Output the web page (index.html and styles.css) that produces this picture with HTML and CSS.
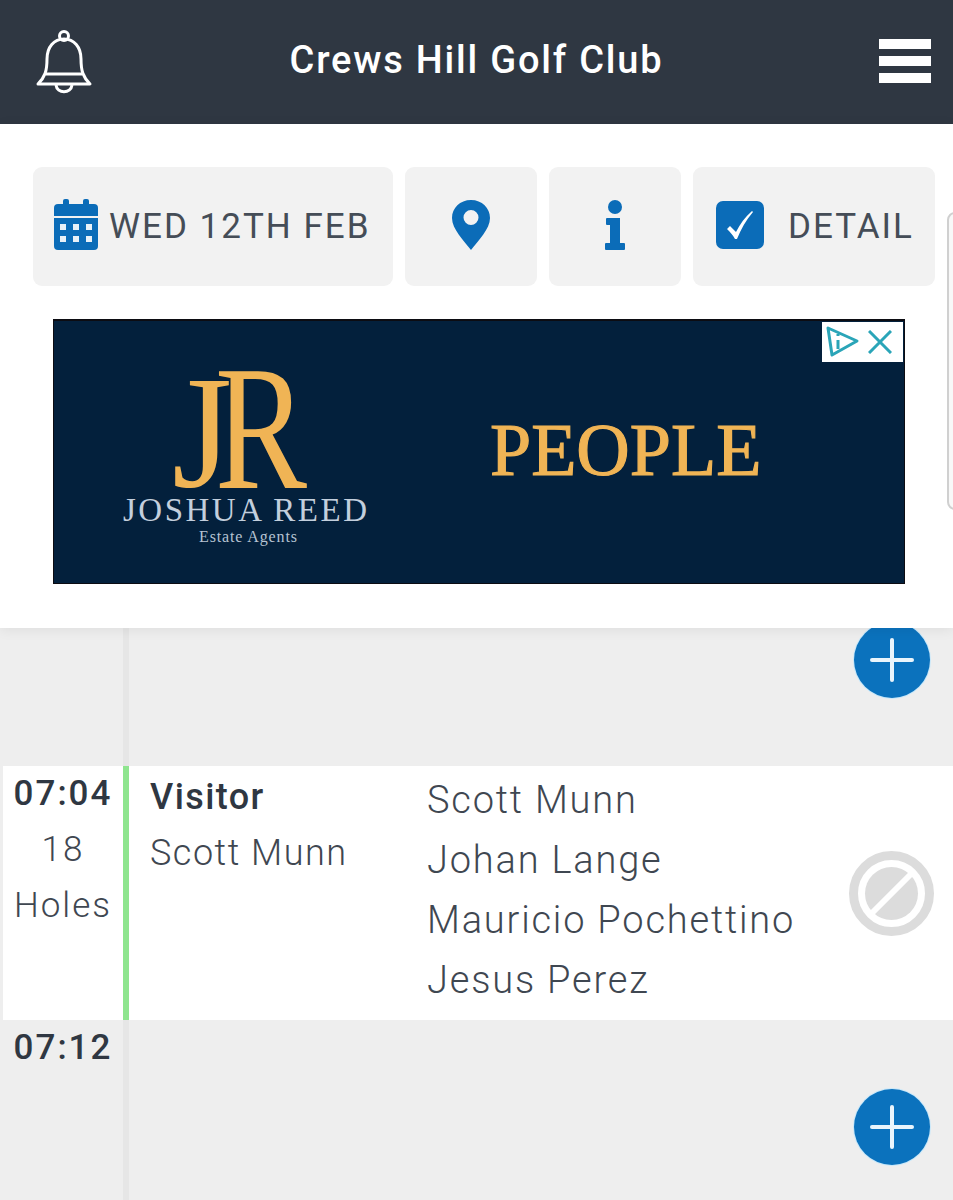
FILE: index.html
```html
<!DOCTYPE html>
<html lang="en">
<head>
  <meta charset="UTF-8" />
  <meta name="viewport" content="width=device-width, initial-scale=1" />
  <title>Crews Hill Golf Club</title>
  <link rel="stylesheet" href="styles.css">
</head>
<body>

  <header class="topbar">
    <div class="bell">
      <svg width="60" height="66" viewBox="0 0 60 66" fill="none" stroke="#fff" stroke-width="3" stroke-linejoin="round">
        <circle cx="30" cy="7" r="4.5" />
        <path d="M4 55 C11 48 13 42 13 30 C13 18 20 10 30 10 C40 10 47 18 47 30 C47 42 49 48 56 55 Z" />
        <path d="M12 45 H48" />
        <path d="M22 56 C23 65 37 65 38 56" />
      </svg>
    </div>
    <div class="club-name">Crews Hill Golf Club</div>
    <div class="burger"><span></span><span></span><span></span></div>
  </header>

  <section class="panel">
    <div class="toolbar">
      <div class="tool tool-date">
        <svg width="44" height="51" viewBox="0 0 44 51">
          <rect x="9" y="0" width="6" height="10" rx="2" fill="#0b6cb8" />
          <rect x="29" y="0" width="6" height="10" rx="2" fill="#0b6cb8" />
          <path d="M4 5 H40 A4 4 0 0 1 44 9 V17 H0 V9 A4 4 0 0 1 4 5 Z" fill="#0b6cb8" />
          <path d="M0 19 H44 V47 A4 4 0 0 1 40 51 H4 A4 4 0 0 1 0 47 Z" fill="#0b6cb8" />
          <g fill="#e8f1f8">
            <rect x="6" y="25" width="6" height="6" /><rect x="19" y="25" width="6" height="6" /><rect x="32" y="25" width="6" height="6" />
            <rect x="6" y="37" width="6" height="6" /><rect x="19" y="37" width="6" height="6" /><rect x="32" y="37" width="6" height="6" />
          </g>
        </svg>
        <span>WED 12TH FEB</span>
      </div>
      <div class="tool tool-icon">
        <svg width="38" height="50" viewBox="0 0 38 50">
          <path fill-rule="evenodd" fill="#0b6cb8" d="M19 0 C8 0 0 8 0 18 C0 29 12 41 19 50 C26 41 38 29 38 18 C38 8 30 0 19 0 Z M19 10 A7.5 7.5 0 1 1 19 25 A7.5 7.5 0 0 1 19 10 Z" />
        </svg>
      </div>
      <div class="tool tool-icon">
        <svg width="20" height="50" viewBox="0 0 20 50" fill="#0b6cb8">
          <circle cx="10" cy="7" r="7" />
          <path d="M2 18 H15 V43 H19 A1 1 0 0 1 20 44 V49 A1 1 0 0 1 19 50 H1 A1 1 0 0 1 0 49 V44 A1 1 0 0 1 1 43 H5 V25 H2 A1 1 0 0 1 1 24 V19 A1 1 0 0 1 2 18 Z" />
        </svg>
      </div>
      <div class="tool tool-detail">
        <div class="checkbox">
          <svg width="30" height="30" viewBox="0 0 30 30" fill="#fff">
            <path d="M2 19 L5 16 L11 22 C15 14 20 7 27 1 L28 2 C21 10 16 19 12 29 L10 29 C8 25 5 22 2 19 Z" />
          </svg>
        </div>
        <span>DETAIL</span>
      </div>
    </div>

    <div class="ad">
      <svg class="ad-logo" width="260" height="230" viewBox="0 -30 260 230">
        <text class="logo-j" x="51" y="131" textLength="60" lengthAdjust="spacingAndGlyphs">J</text>
        <text class="logo-r" x="94" y="133" textLength="92" lengthAdjust="spacingAndGlyphs">R</text>
        <text class="logo-name" x="2" y="166" textLength="244" lengthAdjust="spacing">JOSHUA REED</text>
        <text class="logo-sub" x="78" y="187" textLength="98" lengthAdjust="spacing">Estate Agents</text>
      </svg>
      <div class="ad-word">PEOPLE</div>
      <div class="ad-chip">
        <svg width="34" height="34" viewBox="0 0 34 34" fill="none" stroke="#2aa5b8" stroke-width="3" stroke-linejoin="round">
          <path d="M3 3 L32 16 L7 30 Z" />
          <path d="M13 15 V24 M13 9 V11" />
        </svg>
        <svg width="24" height="24" viewBox="0 0 24 24" stroke="#2aa5b8" stroke-width="3">
          <path d="M1 1 L23 23 M23 1 L1 23" />
        </svg>
      </div>
    </div>

    <div class="next-edge"></div>
  </section>

  <main class="sheet">
    <div class="slot slot-top">
      <div class="slot-time"></div>
      <div class="slot-line"></div>
      <div class="slot-body">
        <div class="add-btn"><span></span></div>
      </div>
    </div>

    <div class="slot slot-booked">
      <div class="slot-time">
        <div class="time">07:04</div>
        <div>18</div>
        <div>Holes</div>
      </div>
      <div class="slot-line"></div>
      <div class="slot-body">
        <div class="booker">
          <div class="booker-type">Visitor</div>
          <div>Scott Munn</div>
        </div>
        <div class="players">
          <div>Scott Munn</div>
          <div>Johan Lange</div>
          <div>Mauricio Pochettino</div>
          <div>Jesus Perez</div>
        </div>
        <div class="ban">
          <svg width="85" height="85" viewBox="0 0 85 85">
            <circle cx="42.5" cy="42.5" r="38" fill="none" stroke="#dcdcdc" stroke-width="9" />
            <circle cx="42.5" cy="42.5" r="26.5" fill="#dcdcdc" />
            <path d="M22 63 L63 22" stroke="#fff" stroke-width="6" />
          </svg>
        </div>
      </div>
    </div>

    <div class="slot slot-last">
      <div class="slot-time">
        <div class="time">07:12</div>
      </div>
      <div class="slot-line"></div>
      <div class="slot-body">
        <div class="add-btn"><span></span></div>
      </div>
    </div>
  </main>

</body>
</html>
```

FILE: styles.css
```css
html, body {
  height: 1200px;
  overflow: hidden;
}

body {
  margin: 0;
  padding: 0;
  font-family: Roboto, "Liberation Sans", sans-serif;
  background-color: #eee;
  color: #3f4751;
}

.topbar {
  display: grid;
  grid-template-columns: 1fr auto 1fr;
  align-items: center;
  height: 124px;
  background-color: #2f3742;
}

.bell {
  padding-left: 34px;
  height: 66px;
}

.club-name {
  margin-top: -4px;
  color: #fff;
  font-size: 38px;
  font-weight: 500;
  letter-spacing: 1.8px;
}

.burger {
  justify-self: end;
  display: flex;
  flex-direction: column;
  gap: 7px;
  width: 52px;
  margin-right: 22px;
  margin-top: -3px;
}

.burger span {
  display: block;
  height: 10px;
  background-color: #fff;
}

.panel {
  position: relative;
  z-index: 2;
  height: 504px;
  padding-top: 43px;
  box-sizing: border-box;
  background-color: #fff;
  box-shadow: 0 2px 12px rgba(0, 0, 0, 0.07);
}

.toolbar {
  display: flex;
  gap: 12px;
  padding-left: 33px;
}

.tool {
  display: flex;
  align-items: center;
  height: 119px;
  box-sizing: border-box;
  background-color: #f2f2f2;
  border-radius: 9px;
  font-size: 35px;
  letter-spacing: 2px;
  color: #454d57;
}

.tool > svg,
.checkbox {
  margin-bottom: 4px;
}

.tool-date {
  width: 360px;
  padding-left: 21px;
  gap: 11px;
}

.tool-icon {
  width: 132px;
  justify-content: center;
}

.tool-detail {
  width: 242px;
  padding-left: 23px;
  gap: 24px;
}

.checkbox {
  display: flex;
  align-items: center;
  justify-content: center;
  width: 48px;
  height: 48px;
  background-color: #0b6cb8;
  border-radius: 7px;
}

.ad {
  position: relative;
  display: flex;
  align-items: center;
  width: 852px;
  height: 265px;
  box-sizing: border-box;
  margin: 33px 0 0 53px;
  background-color: #03203c;
  border: 1px solid #0c0c12;
  border-top-width: 2px;
}

.ad-logo {
  align-self: flex-start;
  margin-left: 67px;
  margin-top: 4px;
  flex-shrink: 0;
}

.logo-j {
  font-family: "Liberation Serif", serif;
  font-size: 160px;
  fill: #f0b455;
}

.logo-r {
  font-family: "Liberation Serif", serif;
  font-size: 177px;
  fill: #f0b455;
}

.logo-name {
  font-family: "Liberation Serif", serif;
  font-size: 33px;
  fill: #c3cfdd;
}

.logo-sub {
  font-family: "Liberation Serif", serif;
  font-size: 16px;
  fill: #b6c3d2;
}

.ad-word {
  margin-left: 109px;
  margin-bottom: 4px;
  font-family: "Liberation Serif", serif;
  font-size: 74px;
  color: #f0b455;
  -webkit-text-stroke: 1.2px #f0b455;
}

.ad-chip {
  position: absolute;
  top: 1px;
  right: 1px;
  display: flex;
  align-items: center;
  gap: 9px;
  width: 81px;
  height: 40px;
  padding-left: 3px;
  box-sizing: border-box;
  background-color: #fff;
}

.next-edge {
  position: absolute;
  top: 88px;
  left: 947px;
  width: 40px;
  height: 298px;
  box-sizing: border-box;
  border: 2px solid #d0d0d0;
  border-radius: 8px;
  background-color: #f8f8f8;
}

.sheet {
  background-color: #eee;
}

.slot {
  display: grid;
  grid-template-columns: 123px 6px 1fr;
  overflow: hidden;
}

.slot-top {
  height: 138px;
}

.slot-booked {
  height: 254px;
}

.slot-last {
  height: 180px;
}

.slot-time {
  padding-left: 3px;
  font-size: 35px;
  font-weight: 300;
  line-height: 56px;
  letter-spacing: 2px;
  text-align: center;
  color: #3f4751;
}

.slot-booked .slot-time {
  background: linear-gradient(to right, #eee 3px, #fff 3px);
}

.time {
  font-weight: 500;
  color: #2f3742;
}

.slot-line {
  background-color: #e6e6e6;
}

.slot-booked .slot-line {
  background-color: #8fe58f;
}

.slot-body {
  display: flex;
  justify-content: flex-end;
}

.slot-top .add-btn {
  margin-top: -6px;
}

.slot-last .add-btn {
  margin-top: 69px;
}

.slot-booked .slot-body {
  background-color: #fff;
  justify-content: flex-start;
}

.booker {
  width: 298px;
  padding: 3px 0 0 21px;
  box-sizing: border-box;
  font-size: 36px;
  font-weight: 300;
  line-height: 56px;
  letter-spacing: 1.5px;
}

.booker-type {
  font-weight: 500;
  color: #2f3742;
  letter-spacing: 1.4px;
}

.players {
  padding-top: 4px;
  font-size: 38px;
  font-weight: 300;
  line-height: 60px;
  letter-spacing: 1.8px;
}

.ban {
  margin-left: auto;
  margin-right: 19px;
  align-self: center;
  height: 85px;
}

.add-btn {
  position: relative;
  width: 76px;
  height: 76px;
  margin-right: 23px;
  border-radius: 50%;
  background-color: #0b72bd;
  box-shadow: 0 0 0 1px #c8e8fa;
}

/* the plus */
.add-btn span::before,
.add-btn span::after {
  content: "";
  position: absolute;
  background-color: #eaf5fc;
  border-radius: 2px;
}

.add-btn span::before {
  left: 16px;
  top: 36px;
  width: 44px;
  height: 4px;
}

.add-btn span::after {
  left: 36px;
  top: 16px;
  width: 4px;
  height: 44px;
}
```
